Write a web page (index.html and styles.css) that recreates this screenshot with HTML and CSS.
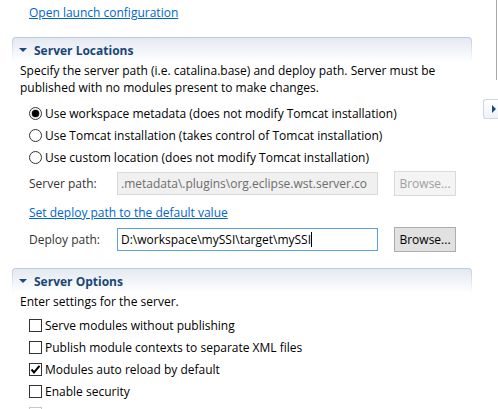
FILE: index.html
```html
<!DOCTYPE html>
<html>
<head>
<meta charset="utf-8">
<title>Server editor</title>
<link rel="stylesheet" href="styles.css">
</head>
<body>
<div class="page">
  <div class="top-link"><a class="link">Open launch configuration</a></div>

  <section class="section">
    <div class="sec-frame"><div class="sec-head"><span class="twisty"></span><span class="sec-title">Server Locations</span></div></div>
    <div class="sec-body">
      <p class="desc">Specify the server path (i.e. catalina.base) and deploy path. Server must be<br>published with no modules present to make changes.</p>
      <div class="choices">
        <div class="choice"><span class="radio on"></span><span>Use workspace metadata (does not modify Tomcat installation)</span></div>
        <div class="choice"><span class="radio"></span><span>Use Tomcat installation (takes control of Tomcat installation)</span></div>
        <div class="choice"><span class="radio"></span><span>Use custom location (does not modify Tomcat installation)</span></div>
      </div>
      <div class="field-row">
        <span class="flabel">Server path:</span>
        <span class="input off">.metadata\.plugins\org.eclipse.wst.server.co</span>
        <span class="btn off">Browse...</span>
      </div>
      <div class="link-row"><a class="link">Set deploy path to the default value</a></div>
      <div class="field-row">
        <span class="flabel">Deploy path:</span>
        <span class="input focus">D:\workspace\mySSI\target\mySSI<span class="caret"></span></span>
        <span class="btn">Browse...</span>
      </div>
    </div>
  </section>

  <section class="section">
    <div class="sec-frame"><div class="sec-head"><span class="twisty"></span><span class="sec-title">Server Options</span></div></div>
    <div class="sec-body">
      <p class="desc">Enter settings for the server.</p>
      <div class="choices">
        <div class="choice"><span class="check"></span><span>Serve modules without publishing</span></div>
        <div class="choice"><span class="check"></span><span>Publish module contexts to separate XML files</span></div>
        <div class="choice"><span class="check on"><svg viewBox="0 0 11 11" width="11" height="11"><path d="M1.5 5.5 L4 8.5 L9.5 1.8" fill="none" stroke="#000" stroke-width="2"/></svg></span><span>Modules auto reload by default</span></div>
        <div class="choice"><span class="check"></span><span>Enable security</span></div>
        <div class="choice"><span class="check dim"></span><span></span></div>
      </div>
    </div>
  </section>

  <div class="side-rule"></div>
  <div class="side-btn"><span class="side-arrow"></span></div>
</div>
</body>
</html>
```

FILE: styles.css
```css
* { box-sizing: border-box; }
html, body { margin: 0; padding: 0; background: #fff; }
body {
  font-family: "Open Sans", "Noto Sans", sans-serif;
  font-size: 12px;
  color: #000;
  overflow: hidden;
}
.page {
  position: relative;
  width: 498px;
  height: 409px;
  overflow: hidden;
}
.link {
  color: #0066cc;
  text-decoration: underline;
  cursor: pointer;
}
.top-link {
  padding: 4px 0 0 29px;
  height: 37px;
  line-height: 17px;
}
.section {
  margin-left: 12px;
  width: 460px;
}
.section + .section { margin-top: 16px; }
.sec-frame {
  padding: 1px 1px 0;
  border-radius: 4px 4px 0 0;
  background: linear-gradient(to bottom, #bccbdd 0, #d6e0ec 10px, rgba(255,255,255,0) 25px);
}
.sec-head {
  height: 24px;
  border-radius: 3px 3px 0 0;
  background: linear-gradient(to bottom, #e4e9f1 0, #f1f4f8 12px, #fff 24px);
  display: flex;
  align-items: center;
  padding-left: 6px;
}
.twisty {
  width: 0;
  height: 0;
  border-left: 4px solid transparent;
  border-right: 4px solid transparent;
  border-top: 4px solid #1d4a7d;
  margin-right: 7px;
  margin-top: -1px;
}
.sec-title {
  font-weight: bold;
  color: #1a4677;
}
.sec-body {
  padding-left: 8px;
}
.desc {
  margin: 0;
  line-height: 17px;
}
.choices {
  display: flex;
  flex-direction: column;
  padding-left: 9px;
  margin-top: 6px;
}
.section + .section .choices { margin-top: 4px; }
.choice {
  height: 22px;
  display: flex;
  align-items: center;
  gap: 3px;
}
.radio {
  width: 13px;
  height: 13px;
  border: 1px solid #333;
  border-radius: 50%;
  display: flex;
  align-items: center;
  justify-content: center;
  flex: none;
}
.radio.on::after {
  content: "";
  width: 7px;
  height: 7px;
  border-radius: 50%;
  background: #000;
  box-shadow: 0 0 0 0.5px #888;
}
.check {
  width: 13px;
  height: 13px;
  border: 1px solid #333;
  display: flex;
  align-items: center;
  justify-content: center;
  flex: none;
}
.check.dim { border-color: #c8c8c8; }
.field-row {
  display: flex;
  align-items: center;
  height: 25px;
  margin-top: 3px;
  padding-left: 9px;
}
.flabel {
  width: 88px;
  color: #333;
}
.input {
  width: 261px;
  height: 23px;
  border: 1px solid #d9d9d9;
  display: flex;
  align-items: center;
  padding-left: 3px;
  white-space: nowrap;
  overflow: hidden;
}
.input.off {
  background: #f0f0f0;
  color: #6d6d6d;
}
.input.focus {
  border-color: #5aa0e8;
  background: #fff;
}
.caret {
  display: inline-block;
  width: 1px;
  height: 15px;
  background: #000;
}
.btn {
  margin-left: 16px;
  width: 62px;
  height: 25px;
  border: 1px solid #adadad;
  background: #e1e1e1;
  display: flex;
  align-items: center;
  justify-content: center;
}
.btn.off {
  background: #f4f4f4;
  border-color: #dadada;
  color: #a0a0a0;
}
.link-row {
  margin-top: 8px;
  padding-left: 9px;
  line-height: 17px;
}
.link-row + .field-row { margin-top: 6px; }
.side-rule {
  position: absolute;
  left: 496px;
  top: 0;
  width: 1px;
  height: 80px;
  background: #a8a8a8;
}
.side-btn {
  position: absolute;
  left: 483px;
  top: 99px;
  width: 16px;
  height: 20px;
  border: 1px solid #cdd6e2;
  border-right: none;
  border-radius: 3px 0 0 3px;
  background: linear-gradient(to bottom, #fff, #eef2f7);
  display: flex;
  align-items: center;
  padding-left: 8px;
}
.side-arrow {
  width: 0;
  height: 0;
  border-top: 4px solid transparent;
  border-bottom: 4px solid transparent;
  border-left: 4px solid #1d4a7d;
}
```
